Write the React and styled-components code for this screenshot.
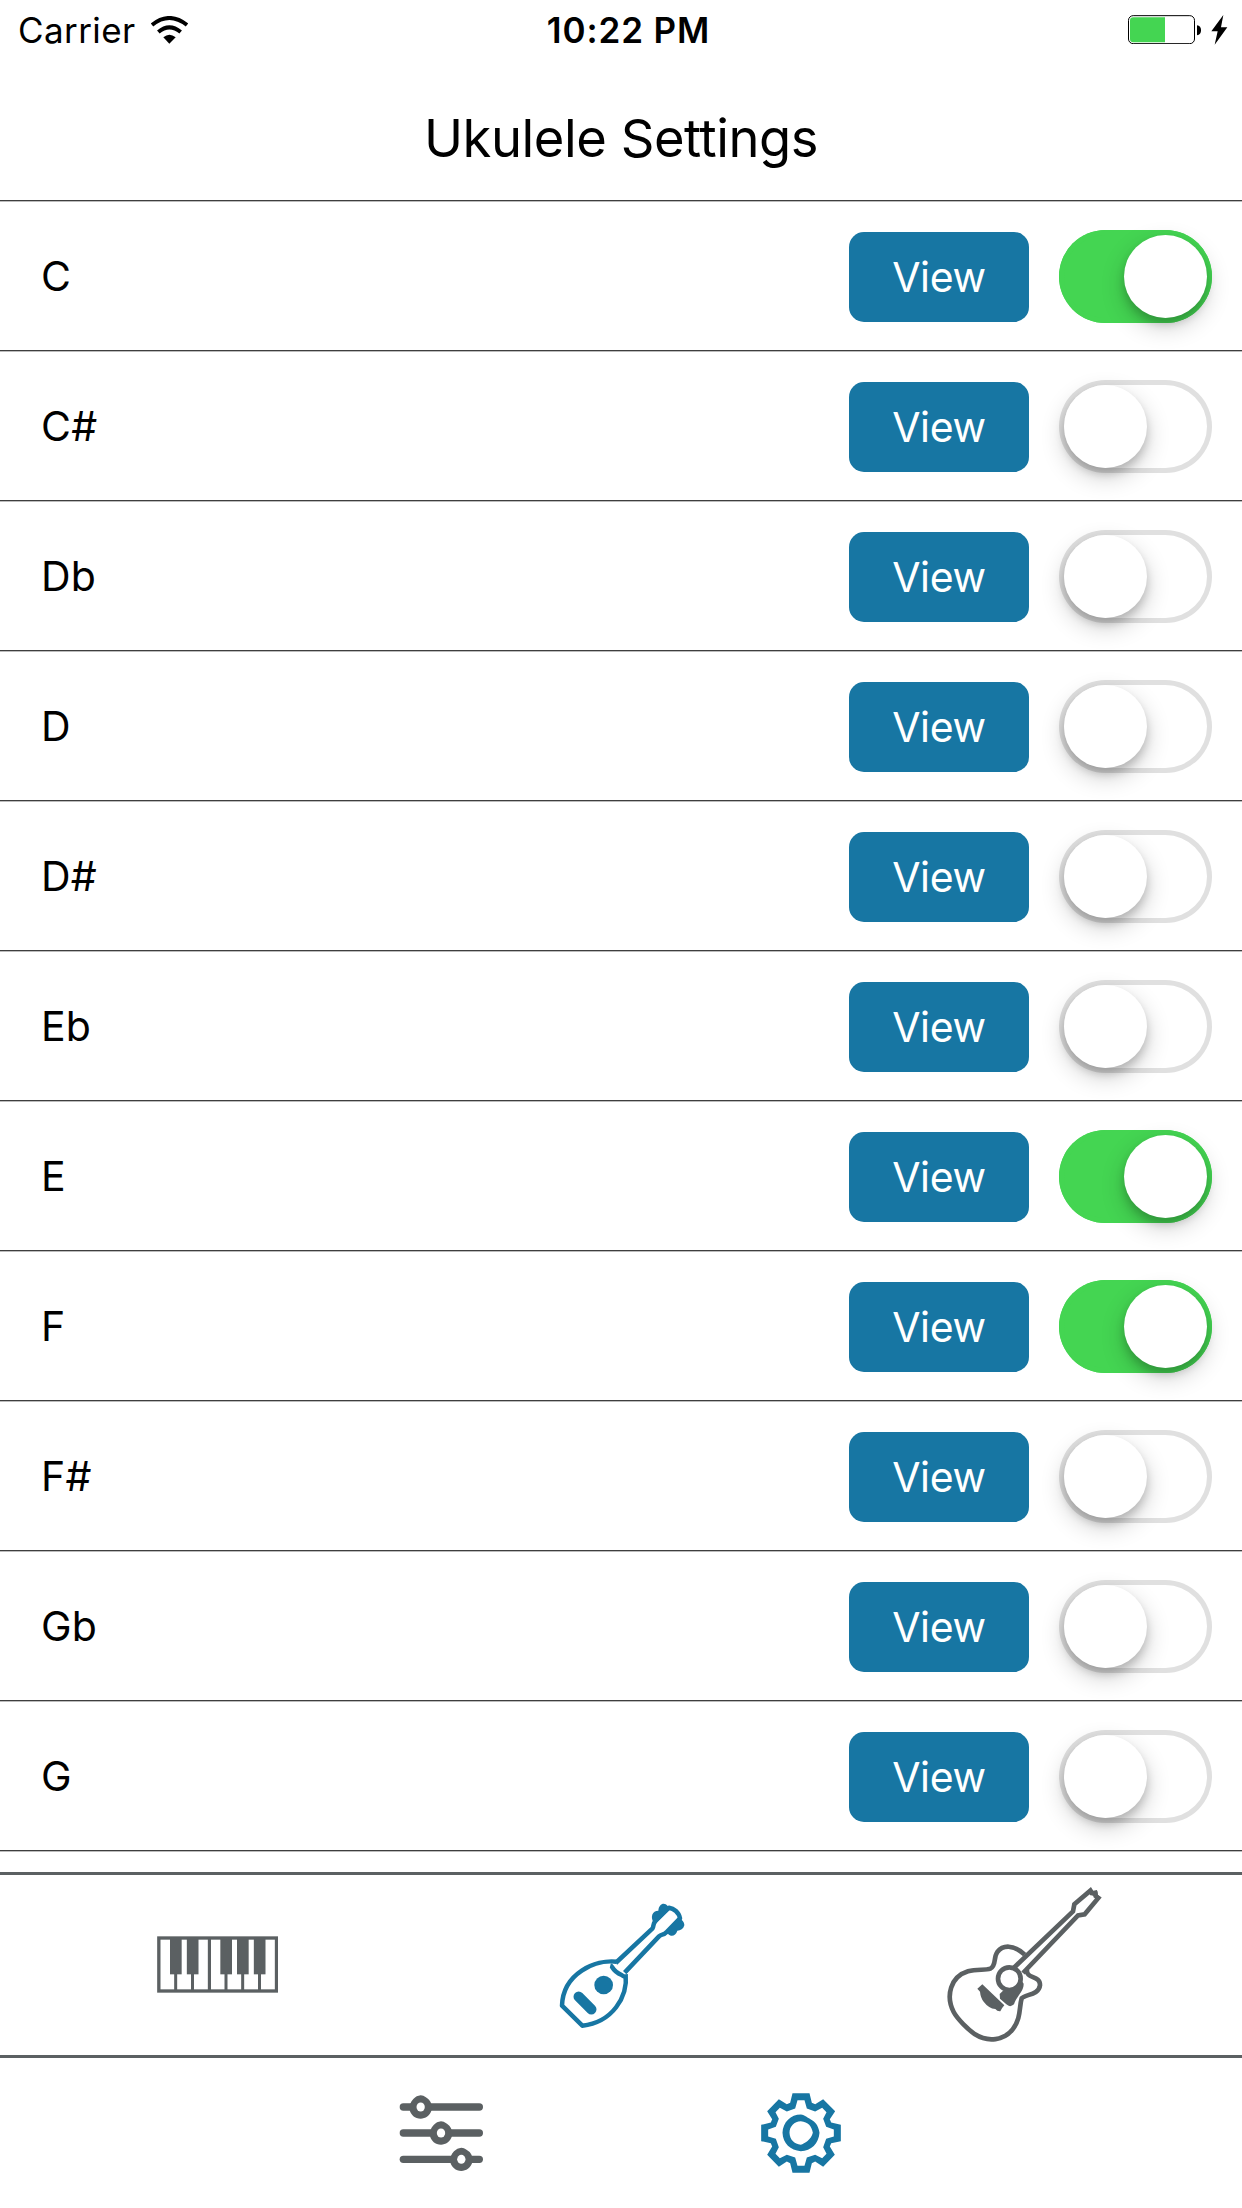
import React from 'react';
import styled, { createGlobalStyle } from 'styled-components';

const BLUE = '#1776a3';
const GRAY = '#5b6062';
const GREEN = '#44d552';

const GlobalStyle = createGlobalStyle`
  * { box-sizing: border-box; }
  body {
    margin: 0;
    background: #fff;
    color: #000;
    font-family: Inter, "Liberation Sans", sans-serif;
  }
`;

const Screen = styled.div`
  width: 1242px;
  height: 2208px;
  display: flex;
  flex-direction: column;
  overflow: hidden;
  background: #fff;
`;

const StatusBar = styled.header`
  height: 60px;
  flex: none;
  display: grid;
  grid-template-columns: 1fr auto 1fr;
  align-items: center;
  padding: 0 14px 1px 18px;
  font-size: 35px;
  line-height: 58px;
`;

const StatusGroup = styled.div`
  display: flex;
  align-items: center;
  justify-content: ${(p) => (p.$end ? 'flex-end' : 'flex-start')};
  gap: ${(p) => p.$gap}px;
  svg { display: block; }
`;

const Carrier = styled.span`
  padding-top: 1px;
  letter-spacing: 0.4px;
`;

const Clock = styled.span`
  padding: 1px 0 0 11px;
  font-weight: 600;
  letter-spacing: 0.9px;
`;

const TitleBar = styled.div`
  height: 140px;
  flex: none;
  display: flex;
  justify-content: center;
  padding-top: 45px;
`;

const Title = styled.h1`
  margin: 0;
  font-size: 52.5px;
  line-height: 66px;
  font-weight: 400;
  letter-spacing: -0.45px;
`;

const List = styled.ul`
  list-style: none;
  margin: 0;
  padding: 0;
  height: 1672px;
  flex: none;
  overflow: hidden;
`;

const Row = styled.li`
  height: 150px;
  display: flex;
  align-items: center;
  padding: 2px 30px 0 41px;
  border-top: 1px solid #3e3e3e;
  box-shadow: inset 0 1px 0 #bcbcbc;
`;

const Label = styled.span`
  flex: 1;
  padding-bottom: 1px;
  font-size: 41px;
  line-height: 50px;
  letter-spacing: 0.2px;
`;

const ViewButton = styled.button`
  width: 180px;
  height: 90px;
  margin: 1px 30px 0 0;
  padding: 0;
  border: 0;
  border-radius: 15px;
  background: ${BLUE};
  color: #fff;
  font: 370 41px/90px Inter, "Liberation Sans", sans-serif;
  letter-spacing: -0.3px;
`;

const Track = styled.div`
  width: 153px;
  height: 93px;
  padding: 5px;
  display: flex;
  justify-content: ${(p) => (p.$on ? 'flex-end' : 'flex-start')};
  border-radius: 47px;
  background: ${(p) => (p.$on ? GREEN : '#fff')};
  box-shadow: inset 0 0 0 5px ${(p) => (p.$on ? GREEN : '#e0e0e0')};
`;

const Thumb = styled.div`
  width: 83px;
  height: 83px;
  border-radius: 50%;
  background: #fff;
  box-shadow: 0 9px 24px rgba(0, 0, 0, 0.2), 0 6px 8px rgba(0, 0, 0, 0.17);
`;

const InstrumentBar = styled.nav`
  height: 183px;
  flex: none;
  display: grid;
  grid-template-columns: repeat(3, 1fr);
  place-items: center;
  padding: 0 16px;
  border-top: 3px solid ${GRAY};
  svg { display: block; }
`;

const BottomBar = styled.nav`
  height: 153px;
  flex: none;
  display: grid;
  grid-template-columns: 360px 360px;
  justify-content: center;
  place-items: center;
  border-top: 3px solid ${GRAY};
  svg { display: block; }
`;

const WifiIcon = () => (
  <svg width="37" height="28" viewBox="450 46 111 84">
    <path d="M453 73 Q505 31 558 73" fill="none" stroke="#000" strokeWidth="12" />
    <path d="M472 94 Q505 66 539 94" fill="none" stroke="#000" strokeWidth="12" />
    <path d="M487 110 Q505 94 524 110 L505 129Z" />
  </svg>
);

const BatteryIcon = () => (
  <svg width="73" height="29" viewBox="258 47 219 87">
    <rect x="259.5" y="49" width="198" height="84" rx="14" fill="none" stroke="#000" strokeWidth="3" />
    <path d="M369 54H274Q264 54 264 64V119Q264 129 274 129H369Z" fill={GREEN} />
    <path d="M465 78Q477 80 477 93T465 108Z" />
  </svg>
);

const BoltIcon = () => (
  <svg width="17" height="30" viewBox="506 45 51 90">
    <path d="M543 45L507 94H526L517 134L555 82H536Z" />
  </svg>
);

const PianoIcon = () => (
  <svg width="121" height="58" viewBox="51 288 363 174">
    <rect x="56.5" y="294" width="353" height="159" fill="#fff" stroke={GRAY} strokeWidth="10" />
    <g fill={GRAY}>
      {[90, 140.5, 241, 291, 341.5].map((x) => (
        <React.Fragment key={x}>
          <rect x={x} y="294" width="35" height="109" />
          <rect x={x + 12.5} y="400" width="9" height="53" />
        </React.Fragment>
      ))}
      <rect x="203.5" y="294" width="9.5" height="159" />
    </g>
  </svg>
);

const UkuleleIcon = () => (
  <svg width="126" height="126" viewBox="55 67 378 378" overflow="visible">
    <g fill="none" stroke={BLUE} strokeWidth="13.5" strokeLinejoin="round">
      <path d="M230 246C168 239 70 280 67 378L128 438C218 428 265 352 258 284" />
      <path d="M212 257C220 259 216 274 246 286C250 290 252 291 256 290" />
      <path d="M228 250L338 147C344 140 337 134 349 122L388 84C402 86 418 98 421 116L381 157C371 168 366 162 358 170L255 279" />
    </g>
    <g fill={BLUE}>
      <path d="M342 128C331 112 338 93 356 93C358 72 374 67 384 79L395 84L352 128Z" />
      <path d="M421 114C425 121 435 126 434 137C431 148 423 153 413 153C408 169 394 173 385 162L375 159L417 116Z" />
      <circle cx="192" cy="316" r="28" />
    </g>
    <path d="M117 351L155 389" stroke={BLUE} strokeWidth="31" strokeLinecap="round" />
  </svg>
);

const GuitarIcon = () => (
  <svg width="153" height="154" viewBox="53 53 459 462" overflow="visible">
    <g fill="none" stroke={GRAY} strokeWidth="14">
      <path d="M283 253C249 221 217 224 201 245C188 263 199 286 180 295C164 301 140 295 113 303C61 319 45 376 70 425C81 446 114 478 134 492C173 517 221 510 247 477C273 443 266 410 274 384C284 372 326 374 329 345C330 313 286 327 290 298" />
      <path d="M251 292L428 123L432 102L480 61L484 68L495 69L496 77L504 83L463 132L443 135L278 308" strokeLinejoin="miter" />
      <circle cx="237" cy="325" r="34" />
    </g>
    <g fill={GRAY}>
      <path d="M476 60L481 53L489 61L500 59L503 74L511 81L502 89L489 76L478 70Z" />
      <path d="M156 342L222 405Q216 411 210 423Q201 424 195 416Q175 414 160 394Q151 383 149 364L141 355Z" />
      <path d="M270 325L280 340C280 365 260 374 251 402Q239 413 228 402L209 385L208 371L218 361Q258 365 270 325Z" />
    </g>
  </svg>
);

const SlidersIcon = () => (
  <svg width="84" height="76" viewBox="57 75 252 228">
    <g stroke={GRAY} strokeWidth="22" strokeLinecap="round">
      <path d="M70 111H298" />
      <path d="M70 189H298" />
      <path d="M70 268H298" />
    </g>
    {[[122, 111], [183, 189], [244, 268]].map(([x, y]) => (
      <g key={x} transform={`translate(${x} ${y})`}>
        <path
          d="M0 -35C12 -34 18 -27 25 -22C32 -14 36 -2 33 9C28 26 14 35 0 35C-17 34 -30 24 -33 8C-35 -5 -30 -15 -22 -24C-15 -31 -9 -34 0 -35Z"
          fill={GRAY}
        />
        <ellipse cx="0" cy="0" rx="12.5" ry="13.5" fill="#fff" />
      </g>
    ))}
  </svg>
);

const GearIcon = () => (
  <svg width="80" height="80" viewBox="63.5 68.5 240 240">
    <path
      fill={BLUE}
      fillRule="evenodd"
      d="M158 69H209L216 98L226 102L250 87L286 123L270 147L274 157L303 164V213L274 219L270 229L285 254L250 290L226 274L216 279L209 308H158L151 279L141 274L117 290L82 254L97 229L93 219L64 213V164L93 157L97 147L82 123L117 87L141 102L151 98ZM173 90L166 115L141 124L120 113L107 126L117 146L108 170L85 178V199L108 206L117 231L107 251L120 264L141 254L166 262L173 287H194L201 262L226 254L247 264L260 251L250 231L259 206L282 199V178L259 170L250 146L260 126L247 113L226 124L201 115L194 90Z"
    />
    <path
      fill={BLUE}
      fillRule="evenodd"
      d="M183 133C195 134 205 144 218 151C230 158 237 172 239 188C237 220 214 243 183 243C152 242 129 219 128 188C129 156 153 133 183 133ZM183 153C163 154 149 168 149 188C150 209 163 222 183 224C194 220 214 209 219 188C216 168 205 155 183 153Z"
    />
  </svg>
);

const notes = [
  { name: 'C', on: true },
  { name: 'C#' },
  { name: 'Db' },
  { name: 'D' },
  { name: 'D#' },
  { name: 'Eb' },
  { name: 'E', on: true },
  { name: 'F', on: true },
  { name: 'F#' },
  { name: 'Gb' },
  { name: 'G' },
];

const NoteRow = ({ name, on }) => (
  <Row>
    <Label>{name}</Label>
    <ViewButton type="button">View</ViewButton>
    <Track $on={on} role="switch" aria-checked={!!on}>
      <Thumb />
    </Track>
  </Row>
);

export default function App() {
  return (
    <>
      <GlobalStyle />
      <Screen>
        <StatusBar>
          <StatusGroup $gap={15}>
            <Carrier>Carrier</Carrier>
            <WifiIcon />
          </StatusGroup>
          <Clock>10:22 PM</Clock>
          <StatusGroup $end $gap={10}>
            <BatteryIcon />
            <BoltIcon />
          </StatusGroup>
        </StatusBar>
        <TitleBar>
          <Title>Ukulele Settings</Title>
        </TitleBar>
        <List>
          {notes.map((n) => (
            <NoteRow key={n.name} {...n} />
          ))}
          <Row />
        </List>
        <InstrumentBar>
          <PianoIcon />
          <UkuleleIcon />
          <GuitarIcon />
        </InstrumentBar>
        <BottomBar>
          <SlidersIcon />
          <GearIcon />
        </BottomBar>
      </Screen>
    </>
  );
}
